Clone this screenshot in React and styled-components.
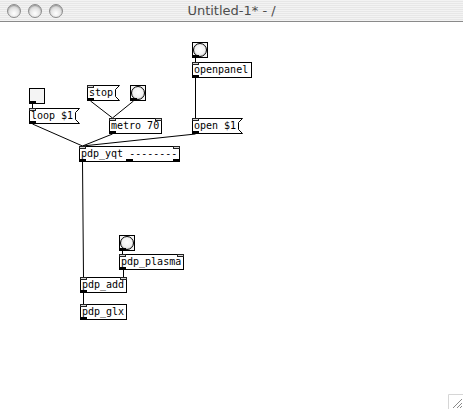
import React from 'react';
import styled, { createGlobalStyle } from 'styled-components';

const TITLE_H = 22;

const GlobalStyle = createGlobalStyle`
  html, body {
    margin: 0;
    padding: 0;
    background: #fff;
    overflow: hidden;
  }
`;

const Window = styled.div`
  width: 463px;
  height: 409px;
  display: flex;
  flex-direction: column;
  background: #fff;
`;

const TitleBar = styled.div`
  height: ${TITLE_H}px;
  box-sizing: border-box;
  display: grid;
  grid-template-columns: 1fr auto 1fr;
  align-items: center;
  border-bottom: 1px solid #8a8a8a;
  background: repeating-linear-gradient(
    to bottom,
    #f3f3f3 0px,
    #f3f3f3 1px,
    #e7e7e7 1px,
    #e7e7e7 2px
  );
`;

const Lights = styled.div`
  display: flex;
  gap: 7px;
  padding-left: 7px;
`;

const Light = styled.span`
  width: 14px;
  height: 14px;
  box-sizing: border-box;
  border-radius: 50%;
  border: 1px solid #8c8c8c;
  background: radial-gradient(circle at 50% 70%, #ffffff 0%, #e6e6e6 45%, #b9b9b9 100%);
  box-shadow: inset 0 1px 1px rgba(0, 0, 0, 0.25);
`;

const Title = styled.div`
  font-family: "DejaVu Sans", sans-serif;
  font-size: 13px;
  color: #4d4d4d;
  white-space: nowrap;
`;

const Canvas = styled.div`
  flex: 1;
  position: relative;
  background: #fff;
`;

const Wires = styled.svg`
  position: absolute;
  left: 0;
  top: 0;
  width: 463px;
  height: ${409 - TITLE_H}px;
  pointer-events: none;
`;

// an object box on the patch canvas
const Box = styled.div`
  position: absolute;
  left: ${(p) => p.$x}px;
  top: ${(p) => p.$y - TITLE_H}px;
  width: ${(p) => p.$w}px;
  height: 16px;
  box-sizing: border-box;
  border: 1px solid #000;
  font-family: "DejaVu Sans Mono", monospace;
  font-size: 10px;
  line-height: 14px;
  padding-left: 1px;
  color: #000;
  white-space: pre;
`;

// a message box, its flag outline drawn by MsgShape
const MsgBox = styled.div`
  position: absolute;
  left: ${(p) => p.$x}px;
  top: ${(p) => p.$y - TITLE_H}px;
  width: ${(p) => p.$w + 4}px;
  height: 16px;
  box-sizing: border-box;
  padding: 1px 0 0 2px;
  font-family: "DejaVu Sans Mono", monospace;
  font-size: 10px;
  line-height: 14px;
  color: #000;
  white-space: pre;
`;

const MsgShape = styled.svg`
  position: absolute;
  left: 0;
  top: 0;
  overflow: visible;
`;

const MsgText = styled.span`
  position: relative;
`;

const Inlet = styled.span`
  position: absolute;
  top: ${(p) => (p.$flat ? 0 : -1)}px;
  left: ${(p) => p.$left}px;
  width: 7px;
  height: 3px;
  box-sizing: border-box;
  border: 1px solid #222;
  background: #d8d8d8;
`;

const Outlet = styled.span`
  position: absolute;
  bottom: ${(p) => (p.$flat ? 0 : -1)}px;
  left: ${(p) => p.$left}px;
  width: 7px;
  height: 3px;
  background: #000;
`;

const GuiBox = styled.div`
  position: absolute;
  left: ${(p) => p.$x}px;
  top: ${(p) => p.$y - TITLE_H}px;
  width: 16px;
  height: 16px;
  box-sizing: border-box;
  border: 1px solid #000;
  background: #f4f4f4;
`;

const BangCircle = styled.span`
  position: absolute;
  left: 0;
  top: 0;
  width: 14px;
  height: 14px;
  box-sizing: border-box;
  border-radius: 50%;
  border: 1px solid #000;
  background: radial-gradient(circle at 50% 45%, #ffffff 0%, #f1f1f1 55%, #9a9a9a 100%);
`;

const Grip = styled.svg`
  position: absolute;
  right: 0;
  bottom: 0;
`;

const objects = [
  { id: 'metro', x: 109, y: 118, w: 53, text: 'metro 70', ins: 2, outs: 1 },
  { id: 'yqt', x: 79, y: 146, w: 101, text: 'pdp_yqt --------', ins: 2, outs: 3 },
  { id: 'openpanel', x: 192, y: 62, w: 60, text: 'openpanel', ins: 1, outs: 1 },
  { id: 'plasma', x: 119, y: 254, w: 65, text: 'pdp_plasma', ins: 2, outs: 1 },
  { id: 'add', x: 80, y: 277, w: 47, text: 'pdp_add', ins: 2, outs: 1 },
  { id: 'glx', x: 80, y: 304, w: 47, text: 'pdp_glx', ins: 1, outs: 1 },
];

const messages = [
  { id: 'loop', x: 29, y: 108, w: 47, text: 'loop $1' },
  { id: 'stop', x: 87, y: 85, w: 29, text: 'stop' },
  { id: 'open', x: 192, y: 118, w: 47, text: 'open $1' },
];

const bangs = [
  { id: 'b1', x: 130, y: 85 },
  { id: 'b2', x: 192, y: 42 },
  { id: 'b3', x: 119, y: 235 },
];

const toggles = [{ id: 't1', x: 29, y: 88 }];

// [x1, y1, x2, y2] in page coordinates
const wires = [
  [32, 104, 32, 108],
  [32, 124, 82, 146],
  [90, 101, 112, 118],
  [133, 101, 112, 118],
  [112, 134, 82, 146],
  [195, 134, 82, 146],
  [195, 58, 195, 62],
  [195, 78, 195, 118],
  [82, 162, 83, 277],
  [122, 251, 122, 254],
  [123, 270, 123, 277],
  [83, 293, 83, 304],
];

function Ports({ ins, outs, w }) {
  const spread = (n) =>
    Array.from({ length: n }, (_, i) =>
      n === 1 ? -1 : Math.round(-1 + ((w - 7) * i) / (n - 1))
    );
  return (
    <>
      {spread(ins).map((l, i) => (
        <Inlet key={'i' + i} $left={l} />
      ))}
      {spread(outs).map((l, i) => (
        <Outlet key={'o' + i} $left={l} />
      ))}
    </>
  );
}

function Message({ x, y, w, text }) {
  const W = w + 4;
  const pts = `0.5,0.5 ${W - 0.5},0.5 ${w - 0.5},4.5 ${w - 0.5},11.5 ${W - 0.5},15.5 0.5,15.5`;
  return (
    <MsgBox $x={x} $y={y} $w={w}>
      <MsgShape width={W} height={16}>
        <polygon points={pts} fill="#fff" stroke="#000" strokeWidth="1" />
      </MsgShape>
      <MsgText>{text}</MsgText>
      <Inlet $left={0} $flat />
      <Outlet $left={0} $flat />
    </MsgBox>
  );
}

export default function App() {
  return (
    <Window>
      <GlobalStyle />
      <TitleBar>
        <Lights>
          <Light />
          <Light />
          <Light />
        </Lights>
        <Title>Untitled-1* - /</Title>
        <div />
      </TitleBar>

      <Canvas>
        <Wires>
          {wires.map(([x1, y1, x2, y2], i) => (
            <line
              key={i}
              x1={x1 + 0.5}
              y1={y1 - TITLE_H}
              x2={x2 + 0.5}
              y2={y2 - TITLE_H}
              stroke="#000"
              strokeWidth="1"
            />
          ))}
        </Wires>

        {objects.map((o) => (
          <Box key={o.id} $x={o.x} $y={o.y} $w={o.w}>
            {o.text}
            <Ports ins={o.ins} outs={o.outs} w={o.w} />
          </Box>
        ))}

        {messages.map((m) => (
          <Message key={m.id} {...m} />
        ))}

        {bangs.map((b) => (
          <GuiBox key={b.id} $x={b.x} $y={b.y}>
            <BangCircle />
            <Outlet $left={-1} />
          </GuiBox>
        ))}

        {toggles.map((t) => (
          <GuiBox key={t.id} $x={t.x} $y={t.y}>
            <Outlet $left={-1} />
          </GuiBox>
        ))}

        <Grip width="15" height="15" viewBox="0 0 15 15">
          <path d="M0.5 15 V0.5 H15" fill="none" stroke="#d6d6d6" />
          <g stroke="#8a8a8a" strokeWidth="1">
            <line x1="5" y1="14" x2="14" y2="5" />
            <line x1="9" y1="14" x2="14" y2="9" />
            <line x1="12" y1="14" x2="14" y2="12" />
          </g>
          <g stroke="#fff" strokeWidth="1">
            <line x1="6" y1="14" x2="14" y2="6" />
            <line x1="10" y1="14" x2="14" y2="10" />
          </g>
        </Grip>
      </Canvas>
    </Window>
  );
}
